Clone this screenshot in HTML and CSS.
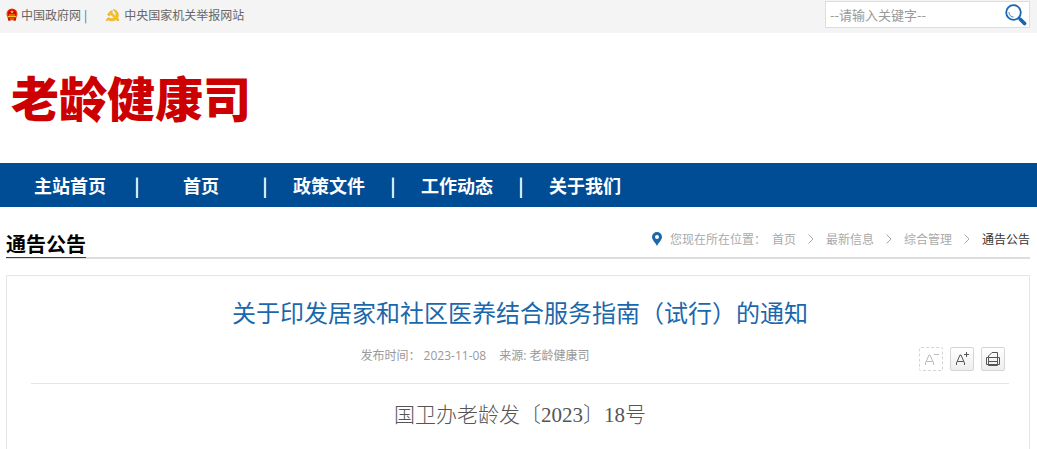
FILE: index.html
```html
<!DOCTYPE html>
<html lang="zh-CN">
<head>
  <meta charset="UTF-8">
  <meta name="viewport" content="width=device-width, initial-scale=1.0">
  <title>关于印发居家和社区医养结合服务指南（试行）的通知</title>
  <link rel="stylesheet" href="styles.css">
</head>
<body>
  <!-- 顶部 -->
  <div class="topbar">
    <div class="top-links">
      <a href="#">
        <svg class="emblem" width="12" height="14" viewBox="0 0 12 14">
          <circle cx="6" cy="6" r="5.5" fill="#e8400c"/>
          <circle cx="6" cy="5.5" r="4" fill="#d90000"/>
          <path d="M6 2l.6 1.2 1.3.1-1 .9.3 1.3L6 4.8l-1.200.7.3-1.300-1-.9 1.300-.1zM3 6.500h6v1H3zM2 8h8v1.200H2z" fill="#ffc21c"/>
          <path d="M1.500 9.500h9l-1 3.500-3.500-1-3.500 1z" fill="#cf1200"/>
          <path d="M4 10.500h4v1H4z" fill="#f7a410"/>
        </svg>中国政府网</a>
      <span class="bar">|</span>
      <a href="#">
        <svg class="party" width="14" height="14" viewBox="0 0 14 14">
          <path d="M7 1.500c5 .5 6.500 5.500 4.500 8.500l1.500 2-1 1-2-1.500C7 13.500 3.500 13 2 11.500L.8 13 0 12.200l2.300-2.500C4.500 11 7 11 8.300 9.800L4.800 6.500 3.200 8 1.500 6.200 5 2.800l1.500.4-.7 1.500 4 3.700C10.800 6 9.800 3.500 7 1.500z" fill="#f9c518" stroke="#e59a0a" stroke-width=".6"/>
        </svg>中央国家机关举报网站</a>
    </div>
    <form class="search">
      <input type="text" placeholder="--请输入关键字--" aria-label="请输入关键字">
      <button type="button" aria-label="搜索">
        <svg width="22" height="22" viewBox="0 0 22 22" fill="none">
          <circle cx="8.500" cy="8.500" r="7.300" stroke="#1c65ad" stroke-width="1.800"/>
          <path d="M4 8c0 3 2 5 4.500 5" stroke="#6da3d3" stroke-width="1.300"/>
          <path d="M13.500 13.500l1.500 1.500" stroke="#1c65ad" stroke-width="2"/>
          <path d="M15.500 15.500l4 4" stroke="#1c65ad" stroke-width="3.800" stroke-linecap="round"/>
        </svg>
      </button>
    </form>
  </div>

  <header class="header">
    <h1 class="logo">老龄健康司</h1>
  </header>

  <!-- 导航 -->
  <nav class="nav">
    <a href="#">主站首页</a>
    <span>|</span>
    <a href="#">首页</a>
    <span>|</span>
    <a href="#">政策文件</a>
    <span>|</span>
    <a href="#">工作动态</a>
    <span>|</span>
    <a href="#">关于我们</a>
  </nav>

  <main class="main">
    <div class="position">
      <h2>通告公告</h2>
      <div class="crumbs">
        <svg class="pin" width="10" height="14" viewBox="0 0 10 14">
          <path d="M5 0a5 5 0 0 0-5 5c0 3 3 5 5 9 2-4 5-6 5-9a5 5 0 0 0-5-5zm0 3a2 2 0 1 1 0 4 2 2 0 0 1 0-4z" fill="#1b67ac" fill-rule="evenodd"/>
        </svg>
        <span class="label">您现在所在位置：</span>
        <a href="#">首页</a>
        <svg class="arrow" width="6" height="10" viewBox="0 0 6 10"><path d="M.5.500L5 5 .5 9.500"/></svg>
        <a href="#">最新信息</a>
        <svg class="arrow" width="6" height="10" viewBox="0 0 6 10"><path d="M.5.500L5 5 .5 9.500"/></svg>
        <a href="#">综合管理</a>
        <svg class="arrow" width="6" height="10" viewBox="0 0 6 10"><path d="M.5.500L5 5 .5 9.500"/></svg>
        <a href="#" class="current">通告公告</a>
      </div>
    </div>

    <!-- 正文 -->
    <article class="article">
      <h3 class="title">关于印发居家和社区医养结合服务指南（试行）的通知</h3>
      <div class="info">
        <div class="source">
          <span>发布时间： 2023-11-08</span>
          <span>来源: 老龄健康司</span>
        </div>
        <div class="tools">
          <button type="button" class="off" aria-label="缩小字体">
            <svg width="24" height="24" viewBox="0 0 24 24"><path d="M6.500 18v-2l3.500-8h1l3.500 8v2M7.500 14.500h6M15 7.500h5"/></svg>
          </button>
          <button type="button" aria-label="放大字体">
            <svg width="24" height="24" viewBox="0 0 24 24"><path d="M6.500 18v-2l3.500-8h1l3.500 8v2M7.500 14.500h6M14 7.500h5M16.500 5v5"/></svg>
          </button>
          <button type="button" aria-label="打印">
            <svg width="24" height="24" viewBox="0 0 24 24"><path d="M7.500 10.500V9l3.500-3.500h5.500v5M5.500 10.500h13v7h-13zM7.500 10.500v8h9v-8M7.500 14.500h9"/></svg>
          </button>
        </div>
      </div>
      <p class="doc-no">国卫办老龄发〔2023〕18号</p>
    </article>
  </main>
</body>
</html>
```
FILE: styles.css
```css
* {
  box-sizing: border-box;
}

body {
  margin: 0;
  background: #fff;
  color: #666;
  font: 12px/20px "Noto Sans CJK SC", sans-serif;
}

h1, h2, h3, p {
  margin: 0;
}

a {
  color: inherit;
  text-decoration: none;
}

svg {
  display: block;
  flex: none;
}

button {
  padding: 0;
  border: none;
  background: none;
  cursor: pointer;
}

/* 顶部 */
.topbar {
  display: flex;
  justify-content: space-between;
  align-items: flex-start;
  padding: 1px 7px 5px 6px;
  background: #f4f4f4;
}

.top-links {
  display: flex;
  padding-top: 4px;
}

.top-links a {
  display: flex;
  align-items: center;
}

.emblem {
  margin-right: 3px;
}

.party {
  margin-right: 4px;
}

.bar {
  margin: 0 19px 0 3px;
}

.search {
  display: flex;
  align-items: center;
  width: 205px;
  height: 27px;
  border: 1px solid #ddd;
  background: #fff;
}

.search input {
  flex: 1;
  min-width: 0;
  padding: 0 4px;
  border: none;
  outline: none;
  background: none;
  font: 13px/20px "Noto Sans CJK SC", sans-serif;
}

.search input::placeholder {
  color: #999;
}

.search button {
  margin-right: 2px;
}

.header {
  padding: 28px 11px 32px;
}

.logo {
  color: #c00;
  font-size: 48px;
  font-weight: 900;
  line-height: 70px;
}

/* 导航 */
.nav {
  display: flex;
  padding-left: 13px;
  background: #004d96;
  color: #fff;
  font-size: 18px;
  font-weight: bold;
  line-height: 44px;
}

.nav a {
  width: 120px;
  text-align: center;
}

.nav a:first-child {
  padding-right: 6px;
}

.nav span {
  display: flex;
  justify-content: center;
  width: 8px;
}

.main {
  padding: 22px 7px 0 6px;
}

.position {
  display: flex;
  justify-content: space-between;
  align-items: flex-start;
  height: 30px;
  border-bottom: 2px solid #ddd;
}

.position h2 {
  height: 29px;
  border-bottom: 1px solid #004d96;
  color: #000;
  font-size: 20px;
  font-weight: bold;
  line-height: 30px;
}

.crumbs {
  display: flex;
  align-items: center;
  color: #aaa;
}

.pin {
  margin-right: 8px;
}

.label {
  margin-right: 6px;
}

.arrow {
  margin: 0 12px;
  fill: none;
  stroke: #aaa;
}

.current {
  color: #333;
}

/* 正文 */
.article {
  margin-top: 16px;
  padding: 16px 20px 19px 24px;
  border: 1px solid #e5e5e5;
  border-bottom: none;
}

.title {
  color: #1b67ac;
  font-size: 24px;
  font-weight: normal;
  line-height: 40px;
  text-align: center;
}

.info {
  display: grid;
  grid-template-columns: 1fr auto;
  padding: 15px 4px 12px 0;
  border-bottom: 1px solid #e5e5e5;
  color: #999;
}

.source {
  display: flex;
  justify-content: center;
  gap: 13px;
  font-family: "Open Sans", "Noto Sans CJK SC", sans-serif;
  line-height: 18px;
}

.tools {
  display: flex;
  gap: 7px;
}

.tools button {
  width: 24px;
  height: 24px;
  border: 1px solid #d5d5d5;
  border-radius: 2px;
  background: linear-gradient(#fff, #eee);
}

.tools svg {
  margin: -1px;
  fill: none;
  stroke: #555;
}

.tools .off {
  border-style: dashed;
  background: #fff;
}

.tools .off svg {
  stroke: #bbb;
}

.doc-no {
  padding-top: 16px;
  color: #555;
  font: 300 21px/30px "Liberation Serif", "Noto Sans CJK SC", serif;
  text-align: center;
}
```
